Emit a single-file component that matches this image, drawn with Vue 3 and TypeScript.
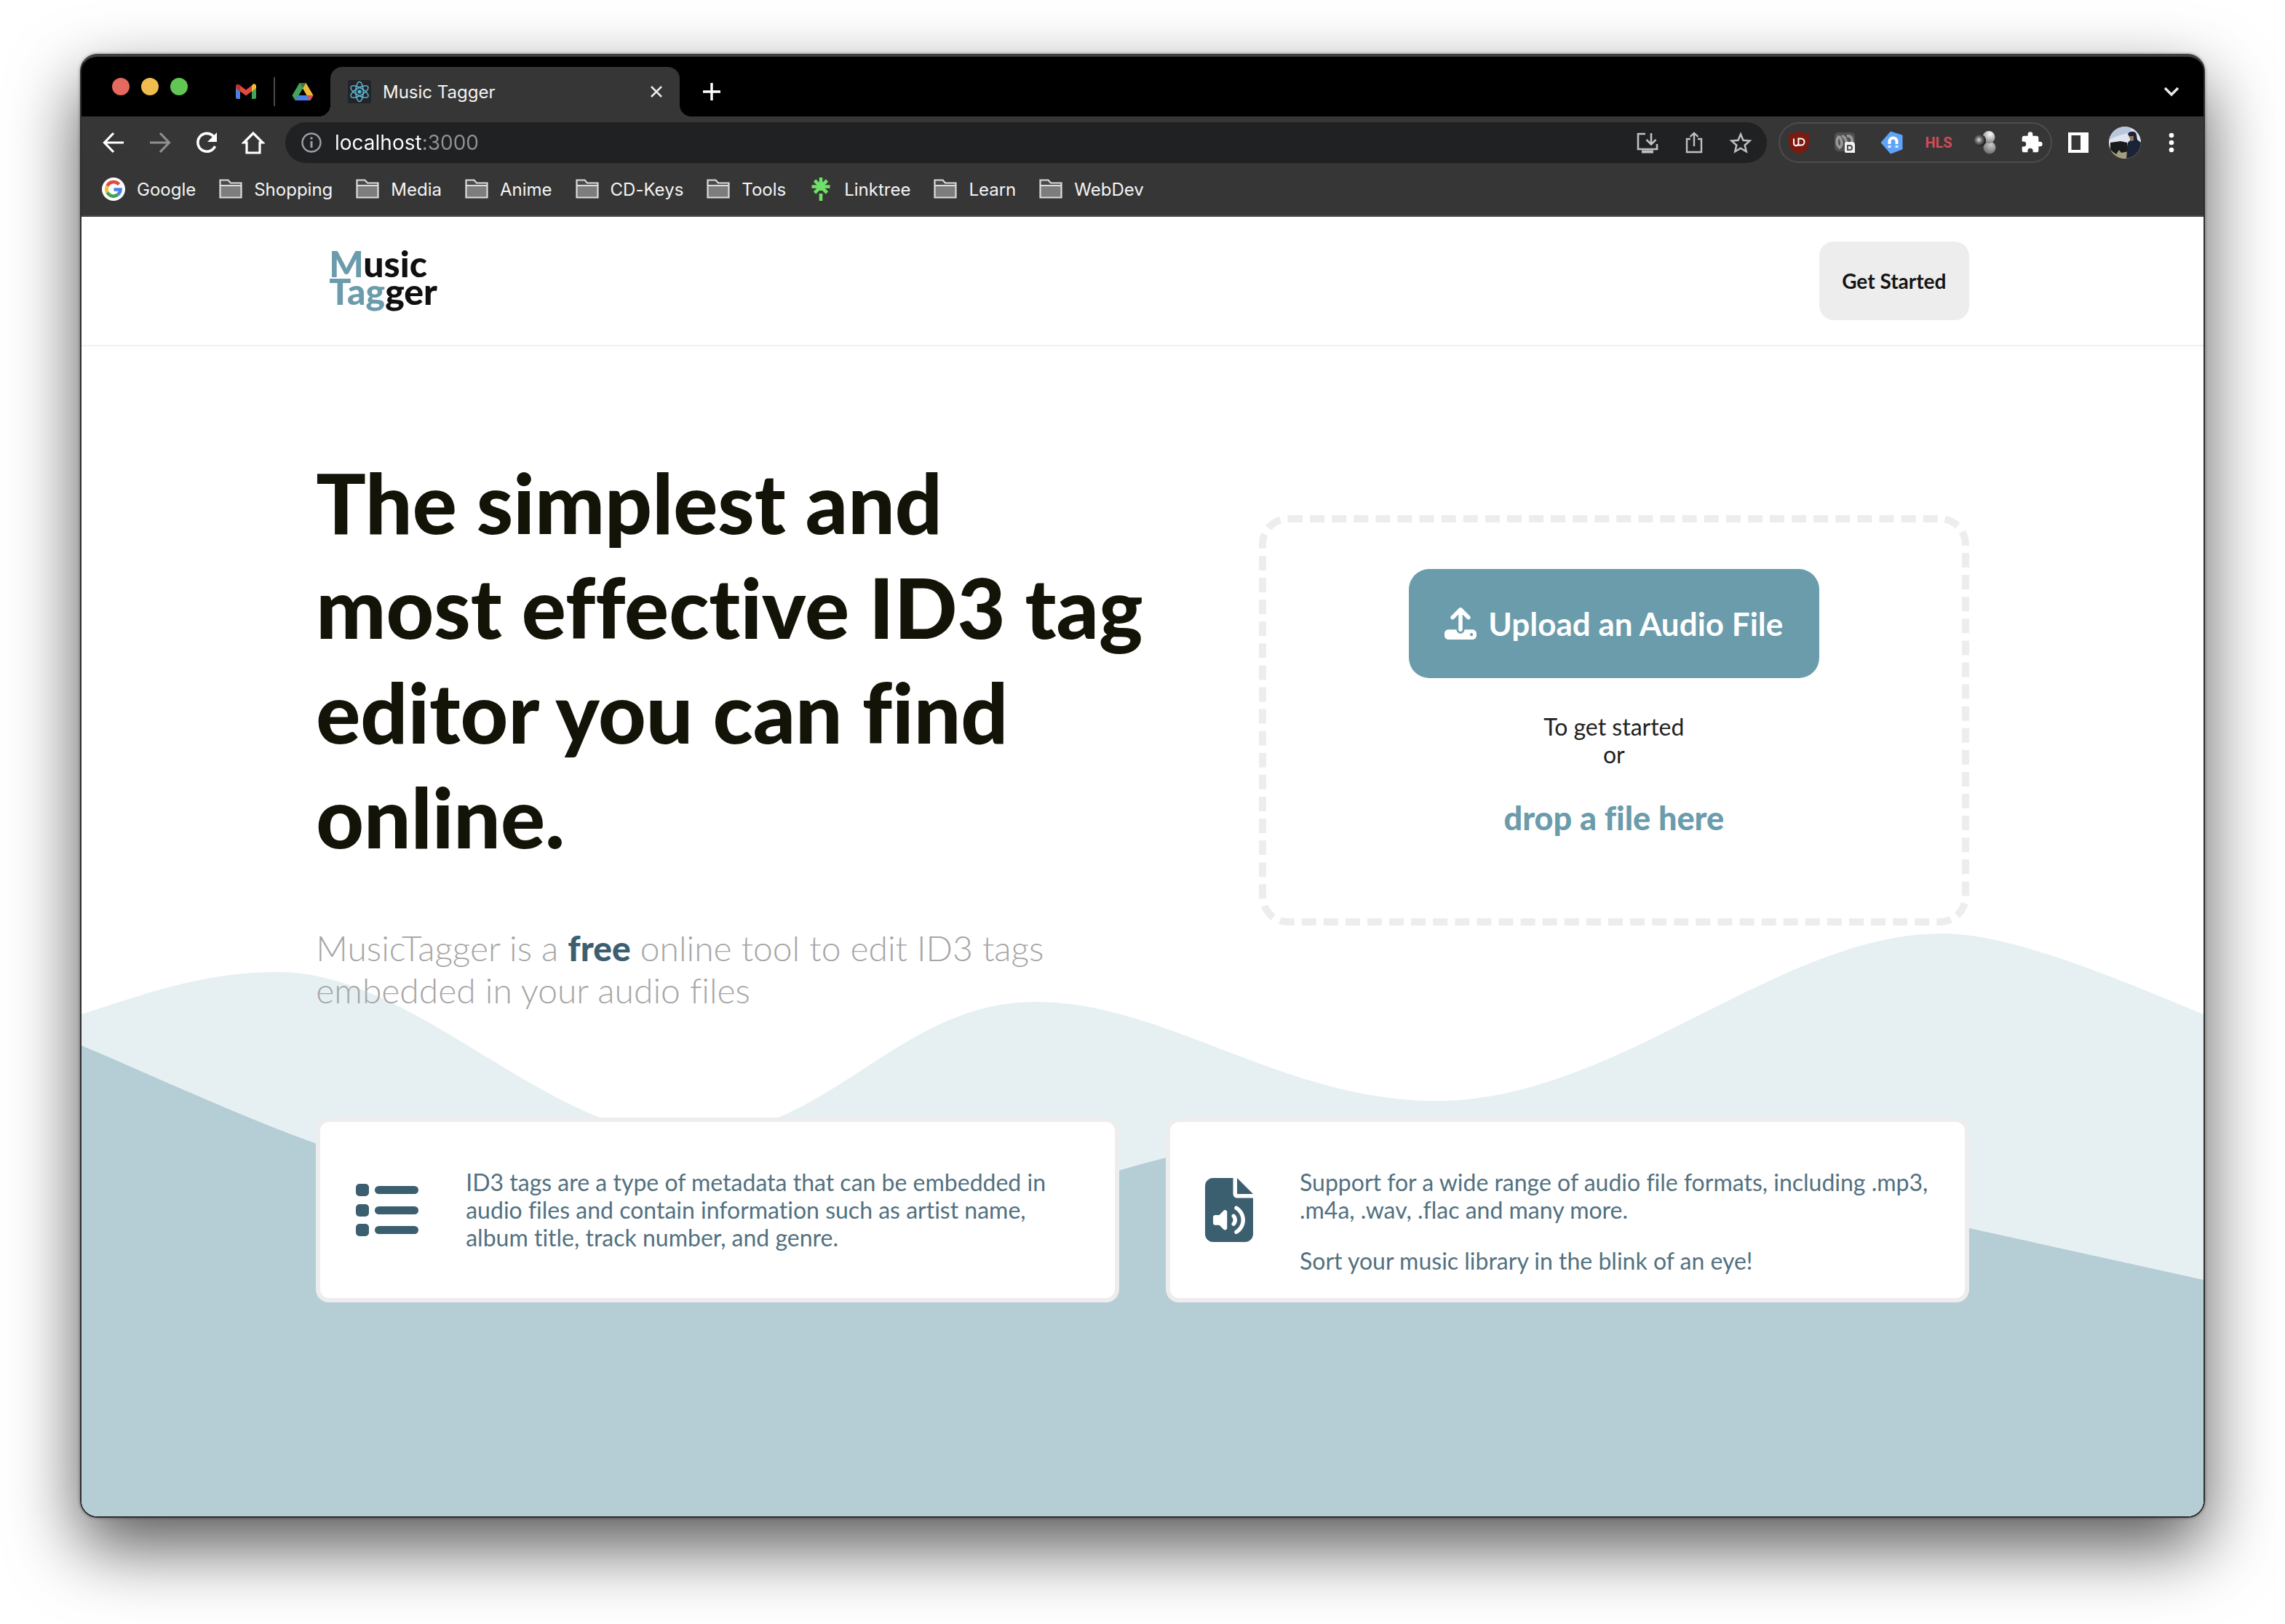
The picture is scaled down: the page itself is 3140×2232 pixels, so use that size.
<script setup lang="ts">
interface Bookmark {
  label: string
  kind: 'google' | 'folder' | 'linktree'
}

const bookmarks: Bookmark[] = [
  { label: 'Google', kind: 'google' },
  { label: 'Shopping', kind: 'folder' },
  { label: 'Media', kind: 'folder' },
  { label: 'Anime', kind: 'folder' },
  { label: 'CD-Keys', kind: 'folder' },
  { label: 'Tools', kind: 'folder' },
  { label: 'Linktree', kind: 'linktree' },
  { label: 'Learn', kind: 'folder' },
  { label: 'WebDev', kind: 'folder' },
]
</script>

<template>
  <div class="desktop">
    <div class="window">
      <div class="tab-strip">
        <div class="lights">
          <button class="light red" aria-label="Close window"></button>
          <button class="light yellow" aria-label="Minimize window"></button>
          <button class="light green" aria-label="Zoom window"></button>
        </div>
        <div class="tabs">
          <button class="bare" aria-label="Gmail">
            <svg class="icon" viewBox="0 0 32 32">
              <path d="M2 7v17c0 1.100.9 2 2 2h4V13z" fill="#4c7fe8" />
              <path d="M24 13v13h4c1.100 0 2-.9 2-2V8z" fill="#3fa556" />
              <path d="M24 8v8l6-5V8.500c0-3-3-4-5-2.500z" fill="#f2bb32" />
              <path d="M8 15.500V7.500l8 6 8-6v8L16 21.500z" fill="#df4a3c" />
              <path d="M2 8.500V11l6 5V7.500L7 6.500C5 5 2 6 2 8.500z" fill="#c03428" />
            </svg>
          </button>
          <span class="tab-divider"></span>
          <button class="bare" aria-label="Google Drive">
            <svg class="icon" viewBox="0 0 32 32">
              <path d="M11.500 4h9L10 22l-4.500 6L1.500 21z" fill="#45a258" />
              <path d="M11.500 4h9l10 17h-9z" fill="#f1b83a" />
              <path d="M11.500 4h9L16 11.500z" fill="#2f7d43" />
              <path d="M10.500 21h20l-4 7h-21z" fill="#4a80ec" />
              <path d="M21.500 21h9l-4 7z" fill="#e2503c" />
            </svg>
          </button>
          <div class="tab">
            <svg class="icon" viewBox="0 0 32 32">
              <rect width="32" height="32" rx="3" fill="#222427" />
              <g fill="none" stroke="#5fb4cf" stroke-width="1.500">
                <ellipse cx="16" cy="16" rx="13.500" ry="5.200" transform="rotate(30 16 16)" />
                <ellipse cx="16" cy="16" rx="13.500" ry="5.200" transform="rotate(90 16 16)" />
                <ellipse cx="16" cy="16" rx="13.500" ry="5.200" transform="rotate(150 16 16)" />
              </g>
              <circle cx="16" cy="16" r="2.600" fill="#5fb4cf" />
            </svg>
            <span class="tab-title">Music Tagger</span>
            <button class="bare" aria-label="Close tab">
              <svg class="small-icon" viewBox="0 0 24 24">
                <path d="M5 5l14 14M19 5L5 19" stroke="#e8e8e8" stroke-width="2.600" />
              </svg>
            </button>
          </div>
          <button class="bare new-tab" aria-label="New tab">
            <svg class="small-icon" viewBox="0 0 24 24">
              <path d="M12 0v24M0 12h24" stroke="#fff" stroke-width="3.400" />
            </svg>
          </button>
          <button class="bare tab-search" aria-label="Search tabs">
            <svg class="small-icon" viewBox="0 0 24 24">
              <path d="M3 7l9 9 9-9" fill="none" stroke="#e8e8e8" stroke-width="3.400" />
            </svg>
          </button>
        </div>
      </div>

      <div class="toolbar">
        <nav class="nav-buttons">
          <button class="bare" aria-label="Back">
            <svg class="icon" viewBox="0 0 32 32">
              <path d="M30 16H5M16 3L3.500 16 16 29" fill="none" stroke="#fff" stroke-width="3.200" />
            </svg>
          </button>
          <button class="bare" aria-label="Forward">
            <svg class="icon" viewBox="0 0 32 32">
              <path d="M2 16h25M16 3l12.500 13L16 29" fill="none" stroke="#8f8f8f" stroke-width="3.200" />
            </svg>
          </button>
          <button class="bare" aria-label="Reload">
            <svg class="icon" viewBox="0 0 32 32">
              <path d="M27.500 21A12.400 12.400 0 1 1 25 7l2 2.500" fill="none" stroke="#fff" stroke-width="3.600" />
              <path d="M30 2v13H17z" fill="#fff" />
            </svg>
          </button>
          <button class="bare" aria-label="Home">
            <svg class="icon" viewBox="0 0 32 32">
              <path d="M16 3L3 16h4v14h18V16h4z" fill="none" stroke="#fff" stroke-width="3.200" />
            </svg>
          </button>
        </nav>
        <div class="omnibox">
          <svg class="icon" viewBox="0 0 32 32">
            <circle cx="16" cy="16" r="12.500" fill="none" stroke="#9aa0a6" stroke-width="2.400" />
            <path d="M16 14v9M16 8.500v3" stroke="#9aa0a6" stroke-width="3" />
          </svg>
          <input class="url" type="text" aria-label="Address" value="localhost:3000" />
          <button class="bare" aria-label="Install app">
            <svg class="icon" viewBox="0 0 32 32" fill="none" stroke="#bdc1c6" stroke-width="2.600">
              <path d="M13 4H3v21h26v-7M21 3v15M14.500 12l6.500 6.500 6.500-6.500" />
              <path d="M8 28.500h16" stroke-width="4" />
            </svg>
          </button>
          <button class="bare" aria-label="Share">
            <svg class="icon" viewBox="0 0 32 32" fill="none" stroke="#bdc1c6" stroke-width="2.400">
              <path d="M11 11H6v18h20V11h-5M16 21V3M10.500 8L16 2.800 21.500 8" />
            </svg>
          </button>
          <button class="bare" aria-label="Bookmark this page">
            <svg class="icon" viewBox="0 0 32 32" fill="none" stroke="#bdc1c6" stroke-width="2.500">
              <path d="M16 4.500l3.500 8.300 9 .8-6.800 5.900 2 8.800L16 23.700l-7.700 4.600 2-8.800-6.800-5.900 9-.8z" />
            </svg>
          </button>
        </div>
        <div class="extensions">
          <button class="bare" aria-label="uBlock Origin">
            <svg class="icon" viewBox="0 0 32 32">
              <path d="M16 0c4 3 9 3.500 14 3.500V14c0 9-5 14.500-14 18C7 28.500 2 23 2 14V3.500C7 3.500 12 3 16 0z" fill="#7c1a10" />
              <path d="M9 10.500V17a3.200 3.200 0 0 0 6.400 0v-6.500M15.400 19.500v-9H19a4.500 4.500 0 0 1 0 9z" fill="none" stroke="#fff" stroke-width="2" />
            </svg>
          </button>
          <button class="bare" aria-label="Link grabber">
            <svg class="icon" viewBox="0 0 32 32">
              <rect x="1" y="2" width="28" height="26" rx="5" fill="#505050" />
              <g fill="none" stroke="#989898" stroke-width="3.600">
                <path d="M7 7c-5 6-3 13 1 16 4-3 4-10-1-16M11 7c5 0 5 6 8 12M18 7c8-1 8 7 6 12" />
              </g>
              <path d="M17 15h8c3 0 4 2 4 5v10H17c-2 0-2-1-2-3V17c0-1 1-2 2-2z" fill="#f2f2f2" />
              <path d="M19 20h3a3 3 0 0 1 0 6h-3z" fill="none" stroke="#4c4c4c" stroke-width="2" />
            </svg>
          </button>
          <button class="bare" aria-label="Magnet">
            <svg class="icon" viewBox="0 0 32 32">
              <path d="M14 1L30 6v19L14 31 1 16z" fill="#5fa4f8" stroke="#5fa4f8" stroke-linejoin="round" />
              <path d="M12.500 18v-3.500a5 5 0 0 1 10 0V18" fill="none" stroke="#fff" stroke-width="4" />
              <path d="M12.500 20v3M22.500 20v3" stroke="#e3efff" stroke-width="4" />
            </svg>
          </button>
          <button class="bare hls" aria-label="HLS player">HLS</button>
          <button class="bare" aria-label="Video helper">
            <svg class="icon" viewBox="0 0 32 32">
              <defs>
                <radialGradient id="ball-light" cx=".6" cy=".25" r=".8">
                  <stop offset="0" stop-color="#fff" />
                  <stop offset="1" stop-color="#777" />
                </radialGradient>
                <radialGradient id="ball-dark" cx=".4" cy=".45" r=".6">
                  <stop offset="0" stop-color="#ddd" />
                  <stop offset=".4" stop-color="#777" />
                  <stop offset="1" stop-color="#111" />
                </radialGradient>
              </defs>
              <circle cx="22" cy="23" r="8.500" fill="url(#ball-light)" opacity=".75" />
              <circle cx="21" cy="8.500" r="8.500" fill="url(#ball-light)" />
              <circle cx="9" cy="13" r="8" fill="url(#ball-dark)" />
            </svg>
          </button>
          <button class="bare" aria-label="Extensions">
            <svg class="icon" viewBox="0 0 24 24">
              <path d="M20.500 11H19V7c0-1.100-.9-2-2-2h-4V3.500a2.500 2.500 0 0 0-5 0V5H4c-1.100 0-2 .9-2 2v3.800h1.500a2.700 2.700 0 0 1 0 5.400H2V20c0 1.100.9 2 2 2h3.800v-1.500a2.700 2.700 0 0 1 5.400 0V22H17c1.100 0 2-.9 2-2v-4h1.500a2.500 2.500 0 0 0 0-5z" fill="#fff" />
            </svg>
          </button>
        </div>
        <div class="toolbar-end">
          <button class="bare" aria-label="Side panel">
            <svg class="icon" viewBox="0 0 32 32">
              <path d="M2 2h28v28H2zM6.500 6v20H19V6z" fill="#fff" fill-rule="evenodd" />
            </svg>
          </button>
          <button class="bare" aria-label="Profile">
            <svg class="avatar" viewBox="0 0 44 44">
              <defs>
                <clipPath id="avatar-clip"><circle cx="22" cy="22" r="22" /></clipPath>
              </defs>
              <g clip-path="url(#avatar-clip)">
                <rect width="44" height="44" fill="#dfe4ee" />
                <path d="M0 0h30v8L14 12 0 18z" fill="#b9c6dc" />
                <path d="M0 30h44v14H0z" fill="#a49c7c" />
                <path d="M2 22l14-2 9 2 2 12-10 2-3-4-4 6-8-6z" fill="#191a1c" />
                <path d="M26 10c3-5 12-4 12 2l1 6 5 4v22H24l2-22 4-4z" fill="#1b2436" />
                <path d="M28 13h6v6l-4 1z" fill="#94725f" />
              </g>
            </svg>
          </button>
          <button class="bare" aria-label="Menu">
            <svg class="icon" viewBox="0 0 32 32" fill="#fff">
              <circle cx="16" cy="6" r="3.300" />
              <circle cx="16" cy="16" r="3.300" />
              <circle cx="16" cy="26" r="3.300" />
            </svg>
          </button>
        </div>
      </div>

      <nav class="bookmarks">
        <a v-for="b in bookmarks" :key="b.label" class="bookmark" href="#">
          <svg v-if="b.kind === 'google'" class="icon" viewBox="0 0 32 32">
            <circle cx="16" cy="16" r="16" fill="#fff" />
            <g fill="none" stroke-width="4.600">
              <path d="M23.500 9.500A9.600 9.600 0 0 0 7.500 11.500" stroke="#e04a3f" />
              <path d="M7.500 11.500a9.600 9.600 0 0 0 0 9" stroke="#f3bd35" />
              <path d="M7.500 20.500a9.600 9.600 0 0 0 15 2.500" stroke="#40a457" />
              <path d="M22.500 23a9.400 9.400 0 0 0 3-6.500H16.500" stroke="#4a7fe8" />
            </g>
          </svg>
          <svg v-else-if="b.kind === 'folder'" class="icon" viewBox="0 0 32 32">
            <path d="M1.500 27V3.500h11l3.500 4h14.500V27z" fill="#4b4b4b" />
            <path d="M2 11h28v16H2z" fill="#7d7d7d" />
            <path d="M1.500 27.500v-24h11l3.500 4h14.500v20zM1.500 11h29" fill="none" stroke="#dcdcdc" stroke-width="2.200" />
          </svg>
          <svg v-else class="icon" viewBox="0 0 32 32">
            <path d="M16 0v18M3.500 12.500h25M7.500 4l17 17M24.500 4l-17 17M16 22v10" fill="none" stroke="#6fe168" stroke-width="4.600" />
          </svg>
          <span>{{ b.label }}</span>
        </a>
      </nav>

      <div class="page">
        <svg class="waves" viewBox="0 0 2916 804" preserveAspectRatio="none" aria-hidden="true">
          <path
            fill="#e6eff2"
            d="M0 114C100 82 170 56 271 56C460 56 640 282 833 282C1030 282 1120 97 1311 97C1490 97 1650 233 1862 233C2110 233 2330 3 2557 3C2650 3 2790 62 2916 114V804H0z"
          />
          <path
            fill="#b5cdd5"
            d="M0 157C120 208 220 255 323 292C600 410 700 440 850 440C1100 440 1250 378 1428 328C1600 280 1700 262 1850 262C2100 262 2350 355 2594 408L2916 479V804H0z"
          />
        </svg>

        <header class="site-header">
          <div class="container header-row">
            <a class="logo" href="#">
              <span><span class="accent">M</span>usic</span>
              <span><span class="accent">Tag</span>ger</span>
            </a>
            <button class="get-started">Get Started</button>
          </div>
        </header>

        <main class="container">
          <section class="hero">
            <div class="pitch">
              <h1>The simplest and<br />most effective ID3 tag editor you can find online.</h1>
              <p class="lead">
                MusicTagger is a <strong>free</strong> online tool to edit ID3 tags embedded in your audio files
              </p>
            </div>
            <div class="drop-zone">
              <button class="upload">
                <svg class="upload-icon" viewBox="0 0 512 512" fill="#fff">
                  <path
                    d="M288 109.300V352c0 17.700-14.300 32-32 32s-32-14.300-32-32V109.300l-73.400 73.400c-12.500 12.500-32.800 12.500-45.300 0s-12.500-32.800 0-45.300l128-128c12.500-12.500 32.800-12.500 45.300 0l128 128c12.500 12.500 12.500 32.800 0 45.300s-32.800 12.500-45.300 0L288 109.300zM64 352H192c0 35.300 28.700 64 64 64s64-28.700 64-64H448c35.300 0 64 28.700 64 64v32c0 35.300-28.700 64-64 64H64c-35.300 0-64-28.700-64-64V416c0-35.300 28.700-64 64-64zM432 456a24 24 0 1 0 0-48 24 24 0 1 0 0 48z"
                  />
                </svg>
                Upload an Audio File
              </button>
              <p class="hint">To get started<br />or</p>
              <p class="drop-text">drop a file here</p>
            </div>
          </section>

          <section class="cards">
            <article class="card">
              <svg class="list-icon" viewBox="0 0 88 88" fill="#3c5f70">
                <rect x="1" y="8" width="18" height="17" rx="5" />
                <rect x="1" y="36" width="18" height="17" rx="5" />
                <rect x="1" y="63" width="18" height="17" rx="5" />
                <rect x="27" y="11" width="60" height="11" rx="5.500" />
                <rect x="27" y="39" width="60" height="11" rx="5.500" />
                <rect x="27" y="66" width="60" height="11" rx="5.500" />
              </svg>
              <div class="card-text">
                <p>
                  ID3 tags are a type of metadata that can be embedded in audio files and contain information such as
                  artist name, album title, track number, and genre.
                </p>
              </div>
            </article>
            <article class="card">
              <svg class="file-icon" viewBox="0 0 384 512" fill="#3c5f70">
                <path
                  d="M64 0C28.700 0 0 28.700 0 64V448c0 35.300 28.700 64 64 64H320c35.300 0 64-28.700 64-64V160H256c-17.700 0-32-14.300-32-32V0H64zM256 0V128H384L256 0zm2 226.300c37.100 22.400 62 63.100 62 109.700s-24.900 87.300-62 109.700c-7.600 4.600-17.400 2.100-22-5.400s-2.100-17.400 5.400-22C269.400 401.500 288 370.900 288 336s-18.600-65.500-46.500-82.300c-7.600-4.600-10-14.400-5.400-22s14.400-10 22-5.400zm-91.900 30.900c6 2.500 9.900 8.300 9.900 14.800V400c0 6.500-3.900 12.300-9.900 14.800s-12.900 1.100-17.400-3.500L113.400 376H80c-8.800 0-16-7.200-16-16V312c0-8.800 7.200-16 16-16h33.400l35.300-35.300c4.600-4.600 11.500-5.900 17.400-3.500zm51 34.900c6.600-5.900 16.700-5.300 22.600 1.300C249.800 304.600 256 319.600 256 336s-6.200 31.400-16.300 42.700c-5.900 6.600-16 7.100-22.600 1.300s-7.100-16-1.300-22.600c5.100-5.700 8.100-13.100 8.100-21.300s-3.100-15.700-8.100-21.300c-5.900-6.600-5.300-16.700 1.300-22.600z"
                />
              </svg>
              <div class="card-text">
                <p>Support for a wide range of audio file formats, including .mp3, .m4a, .wav, .flac and many more.</p>
                <p>Sort your music library in the blink of an eye!</p>
              </div>
            </article>
          </section>
        </main>
      </div>
    </div>
  </div>
</template>

<style>
body {
  margin: 0;
  background: #fff;
}
</style>

<style scoped>
.desktop {
  box-sizing: border-box;
  min-height: 100vh;
  padding: 74px 110px 146px;
  display: flex;
  flex-direction: column;
  overflow: hidden;
}

.window {
  flex: 1;
  display: flex;
  flex-direction: column;
  border: 2px solid #2e2e2e;
  border-top: 4px solid #404040;
  border-radius: 24px;
  overflow: hidden;
  background: #363636;
  box-shadow:
    0 0 4px rgba(0, 0, 0, 0.4),
    0 40px 96px rgba(0, 0, 0, 0.66);
  font-family: Lato, sans-serif;
  font-variant-ligatures: none;
}

button {
  font: inherit;
  font-variant-ligatures: none;
  border: 0;
  cursor: pointer;
}

.bare {
  display: flex;
  padding: 0;
  background: none;
}

.icon {
  display: block;
  flex: none;
  width: 32px;
  height: 32px;
}

.small-icon {
  display: block;
  width: 24px;
  height: 24px;
}

/* Tab strip */
.tab-strip {
  display: flex;
  align-items: center;
  height: 82px;
  padding: 0 32px 0 42px;
  gap: 64px;
  background: #000;
  font-family: Inter, sans-serif;
}

.lights {
  display: flex;
  gap: 16px;
}

.light {
  width: 24px;
  height: 24px;
  padding: 0;
  border-radius: 50%;
}

.red {
  background: #e4695f;
}

.yellow {
  background: #efbd4f;
}

.green {
  background: #62c654;
}

.tabs {
  flex: 1;
  align-self: flex-end;
  display: flex;
  align-items: center;
  gap: 22px;
  height: 68px;
}

.tab-divider {
  width: 2px;
  height: 40px;
  background: #4a4a4a;
}

.tab {
  position: relative;
  box-sizing: border-box;
  display: flex;
  align-items: center;
  gap: 16px;
  width: 480px;
  height: 68px;
  padding: 0 20px 0 24px;
  border-radius: 16px 16px 0 0;
  background: #363636;
}

.tab::before,
.tab::after {
  content: '';
  position: absolute;
  bottom: 0;
  width: 16px;
  height: 16px;
}

.tab::before {
  right: 100%;
  background: radial-gradient(circle at 0 0, #000 16px, #363636 16px);
}

.tab::after {
  left: 100%;
  background: radial-gradient(circle at 100% 0, #000 16px, #363636 16px);
}

.tab-title {
  flex: 1;
  font-size: 24px;
  color: #f4f4f4;
}

.new-tab {
  margin-left: 10px;
}

.tab-search {
  margin-left: auto;
}

/* Toolbar */
.toolbar {
  display: flex;
  align-items: center;
  height: 72px;
  padding: 0 28px;
  font-family: Inter, sans-serif;
}

.nav-buttons {
  display: flex;
  gap: 32px;
  margin-right: 28px;
}

.omnibox {
  flex: 1;
  box-sizing: border-box;
  display: flex;
  align-items: center;
  gap: 32px;
  height: 56px;
  padding: 0 20px;
  border-radius: 28px;
  background: #202123;
}

.url {
  flex: 1;
  min-width: 0;
  margin-left: -16px;
  padding: 0;
  border: 0;
  outline: 0;
  font: 400 28px Inter, sans-serif;
  color: transparent;
  background: linear-gradient(90deg, #fff 121px, #8f9194 121px);
  background-clip: text;
  -webkit-background-clip: text;
}

.extensions {
  box-sizing: border-box;
  display: flex;
  align-items: center;
  gap: 32px;
  height: 56px;
  margin: 0 20px 0 16px;
  padding: 0 12px;
  border-radius: 28px;
  box-shadow: inset 0 0 0 2px #4c4c4c;
}

.hls {
  justify-content: center;
  width: 32px;
  font: 700 20px Roboto, sans-serif;
  color: #d04c5c;
}

.toolbar-end {
  display: flex;
  align-items: center;
  gap: 26px;
}

.avatar {
  display: block;
  width: 44px;
  height: 44px;
}

/* Bookmarks */
.bookmarks {
  display: flex;
  align-items: center;
  gap: 32px;
  height: 56px;
  padding: 0 28px 8px;
  border-bottom: 2px solid #4a4a4a;
  font-family: Inter, sans-serif;
}

.bookmark {
  display: flex;
  align-items: center;
  gap: 16px;
  font-size: 24px;
  color: #f4f4f4;
  text-decoration: none;
}

/* Page */
.page {
  position: relative;
  flex: 1;
  background: #fff;
}

.waves {
  position: absolute;
  left: 0;
  bottom: 0;
  width: 100%;
  height: 804px;
}

.container {
  position: relative;
  width: 77.9%;
  margin: 0 auto;
}

.site-header {
  border-bottom: 2px solid #f1f1f1;
}

.header-row {
  display: flex;
  align-items: center;
  justify-content: space-between;
  height: 176px;
}

.logo {
  display: flex;
  flex-direction: column;
  margin: 0 0 10px 18px;
  font-size: 50px;
  font-weight: 900;
  line-height: 38px;
  color: #101010;
  text-decoration: none;
}

.accent {
  color: #6b9cac;
}

.get-started {
  width: 206px;
  height: 108px;
  padding: 0;
  border-radius: 20px;
  background: #ededed;
  font-size: 28px;
  font-weight: 700;
  color: #151515;
}

.hero {
  display: flex;
  align-items: flex-start;
  justify-content: space-between;
  padding-top: 142px;
}

.pitch {
  width: 1168px;
}

h1 {
  margin: 0;
  font-size: 114px;
  font-weight: 900;
  line-height: 144px;
  color: #131308;
}

.lead {
  width: 1080px;
  margin: 80px 0 0;
  font-size: 48px;
  font-weight: 300;
  line-height: 58px;
  color: #a6a6a6;
}

.lead strong {
  font-weight: 900;
  color: #3c5f70;
}

.drop-zone {
  box-sizing: border-box;
  display: flex;
  flex-direction: column;
  align-items: center;
  width: 976px;
  margin-top: 90px;
  padding: 64px 0 112px;
  border: 10px dashed #ededed;
  border-radius: 40px;
}

.upload {
  display: flex;
  align-items: center;
  justify-content: center;
  gap: 16px;
  width: 564px;
  height: 150px;
  padding: 0;
  border-radius: 28px;
  background: #6b9cac;
  font-size: 44px;
  font-weight: 700;
  color: #fff;
}

.upload-icon {
  width: 44px;
  height: 44px;
}

.hint {
  margin: 48px 0 42px;
  font-size: 32px;
  line-height: 38px;
  text-align: center;
  color: #222;
}

.drop-text {
  margin: 0;
  font-size: 45px;
  font-weight: 900;
  line-height: 52px;
  color: #6b9cac;
}

.cards {
  display: grid;
  grid-template-columns: 1fr 1fr;
  gap: 64px;
  margin-top: 146px;
}

.card {
  box-sizing: border-box;
  display: flex;
  align-items: center;
  min-height: 254px;
  padding: 0 48px;
  border: 6px solid #ededed;
  border-radius: 18px;
  background: #fff;
}

.list-icon {
  flex: none;
  width: 88px;
  height: 88px;
  margin-right: 64px;
}

.file-icon {
  flex: none;
  width: 66px;
  height: 88px;
  margin-right: 64px;
}

.card-text {
  flex: 1;
  align-self: flex-start;
  display: flex;
  flex-direction: column;
  gap: 32px;
  padding-top: 64px;
}

.card-text p {
  margin: 0;
  font-size: 32px;
  line-height: 38px;
  color: #527180;
}
</style>
